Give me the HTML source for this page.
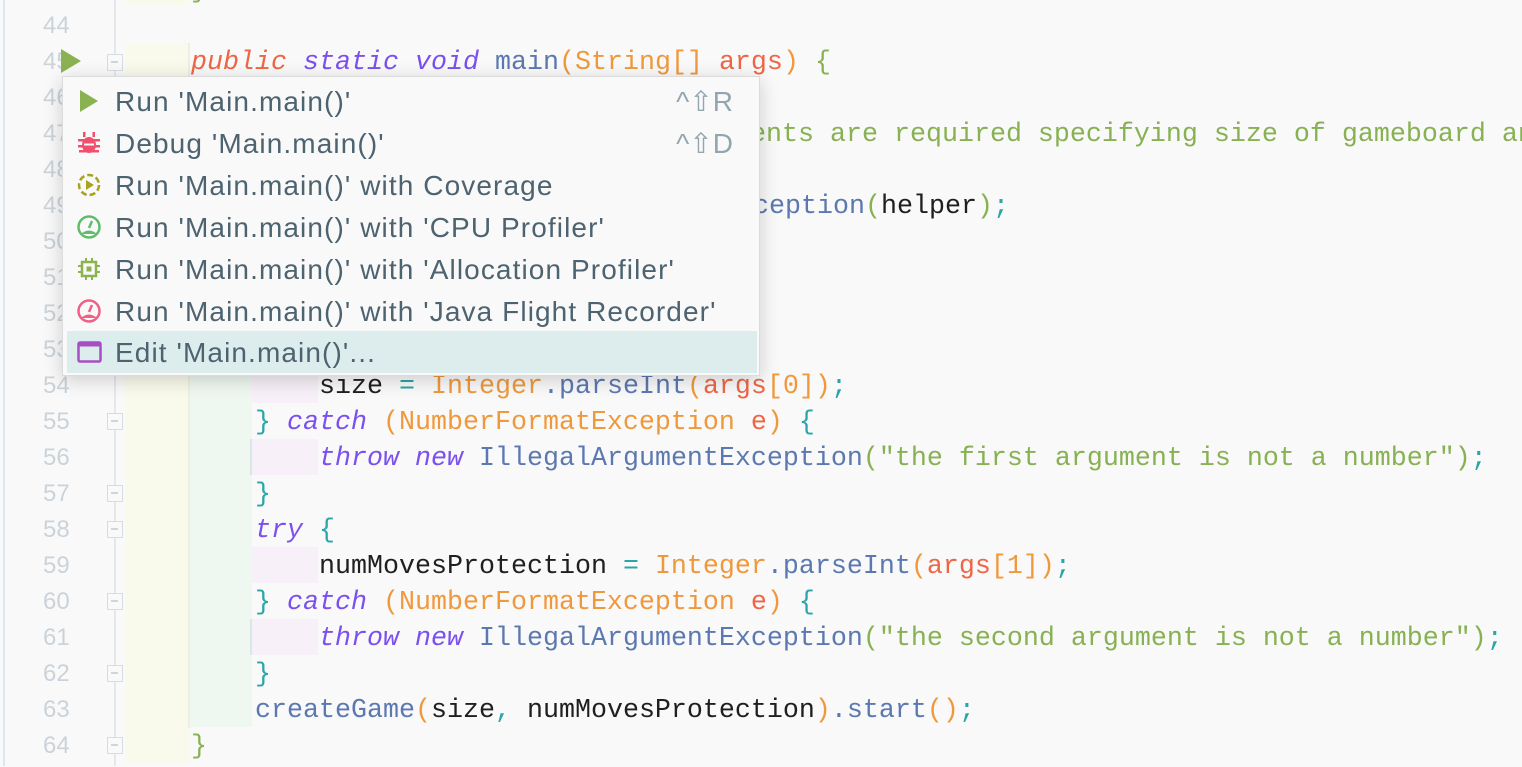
<!DOCTYPE html>
<html><head><meta charset="utf-8"><style>
*{margin:0;padding:0;box-sizing:border-box}
body{width:1522px;height:766px;background:#f9f9f9;position:relative;overflow:hidden;font-family:"Liberation Mono",monospace}
.ln{position:absolute;left:43px;width:40px;text-align:left;font-family:"Liberation Sans",sans-serif;font-size:24px;color:#cbd3d9;height:36px;line-height:38px}
.c{position:absolute;font-size:26.67px;line-height:40px;height:36px;white-space:pre;color:#1f1f1f}
.k{color:#7b50ee;font-style:italic}
.kp{color:#ee6645;font-style:italic}
.o{color:#f0983c}.r{color:#ee6645}.b{color:#5b78b1}.g{color:#87b152}.t{color:#2aa5a8}
.band{position:absolute}
.fold{position:absolute;left:107px;width:16px;height:17px;border:1.5px solid #d6dde2;background:#f9f9f9}
.fold::after{content:"";position:absolute;left:3px;top:6px;width:7px;height:1.5px;background:#cfd6db}
.pop{position:absolute;left:62px;top:76px;width:698px;height:300px;background:#f9f9f9;border:1px solid #dcdcdc;box-shadow:0 4px 18px rgba(0,0,0,.18)}
.it{position:absolute;left:4px;width:690px;height:42px;font-family:"Liberation Sans",sans-serif;font-size:28px;letter-spacing:1.1px;color:#4d6370;line-height:44px}
.it .tx{position:absolute;left:48px}
.it .sc{position:absolute;right:24px;color:#93a6b0;letter-spacing:0}
.it svg{position:absolute;left:10px;top:9px}
</style></head><body>
<div style="position:absolute;left:3px;top:0;width:2px;height:766px;background:#dde7ee"></div>
<div style="position:absolute;left:114px;top:0;width:2px;height:766px;background:#e4e8eb"></div>
<div class="band" style="left:126px;top:0;width:64px;height:6px;background:#f9faec"></div>
<div class="band" style="left:126px;top:43px;width:64px;height:720px;background:#f9faec"></div>
<div class="band" style="left:188px;top:43px;width:2px;height:685px;background:#eef0dc"></div>
<div class="band" style="left:190px;top:115px;width:62px;height:612px;background:#eff8f0"></div>
<div class="band" style="left:252px;top:367px;width:66px;height:36px;background:#f8f0f8"></div>
<div class="band" style="left:252px;top:439px;width:66px;height:36px;background:#f8f0f8"></div>
<div class="band" style="left:252px;top:547px;width:66px;height:36px;background:#f8f0f8"></div>
<div class="band" style="left:252px;top:619px;width:66px;height:36px;background:#f8f0f8"></div>
<div class="band" style="left:250px;top:439px;width:2px;height:36px;background:#d9e8e6"></div>
<div class="band" style="left:250px;top:619px;width:2px;height:36px;background:#d9e8e6"></div>

<div class="ln" style="top:7px">44</div><div class="ln" style="top:43px">45</div><div class="ln" style="top:79px">46</div><div class="ln" style="top:115px">47</div><div class="ln" style="top:151px">48</div><div class="ln" style="top:187px">49</div><div class="ln" style="top:223px">50</div><div class="ln" style="top:259px">51</div><div class="ln" style="top:295px">52</div><div class="ln" style="top:331px">53</div><div class="ln" style="top:367px">54</div><div class="ln" style="top:403px">55</div><div class="ln" style="top:439px">56</div><div class="ln" style="top:475px">57</div><div class="ln" style="top:511px">58</div><div class="ln" style="top:547px">59</div><div class="ln" style="top:583px">60</div><div class="ln" style="top:619px">61</div><div class="ln" style="top:655px">62</div><div class="ln" style="top:691px">63</div><div class="ln" style="top:727px">64</div>

<div class="fold" style="top:54px"></div><div class="fold" style="top:413px"></div><div class="fold" style="top:485px"></div><div class="fold" style="top:521px"></div><div class="fold" style="top:593px"></div><div class="fold" style="top:665px"></div><div class="fold" style="top:737px"></div>

<svg style="position:absolute;left:60px;top:48px" width="22" height="26"><path d="M1 1 L21 13 L1 25Z" fill="#8bb252"/></svg>

<div class="c" style="left:191px;top:-29px"><span class="g">}</span></div>
<div class="c" style="left:191px;top:43px"><span class="kp">public</span> <span class="k">static</span> <span class="k">void</span> <span class="b">main</span><span class="o">(String[]</span> <span class="r">args</span><span class="o">)</span> <span class="g">{</span></div>
<div class="c g" style="left:750px;top:115px">ents are required specifying size of gameboard and</div>
<div class="c" style="left:753px;top:187px"><span class="b">ception</span><span class="g">(</span>helper<span class="g">)</span><span class="t">;</span></div>
<div class="c" style="left:319px;top:367px">size <span class="t">=</span> <span class="o">Integer</span><span class="b">.parseInt</span><span class="o">(</span><span class="r">args</span><span class="o">[0])</span><span class="t">;</span></div>
<div class="c" style="left:255px;top:403px"><span class="t">}</span> <span class="k">catch</span> <span class="o">(NumberFormatException</span> <span class="r">e</span><span class="o">)</span> <span class="t">{</span></div>
<div class="c" style="left:319px;top:439px"><span class="k">throw</span> <span class="k">new</span> <span class="b">IllegalArgumentException</span><span class="g">("the first argument is not a number")</span><span class="t">;</span></div>
<div class="c" style="left:255px;top:475px"><span class="t">}</span></div>
<div class="c" style="left:255px;top:511px"><span class="k">try</span> <span class="t">{</span></div>
<div class="c" style="left:319px;top:547px">numMovesProtection <span class="t">=</span> <span class="o">Integer</span><span class="b">.parseInt</span><span class="o">(</span><span class="r">args</span><span class="o">[1])</span><span class="t">;</span></div>
<div class="c" style="left:255px;top:583px"><span class="t">}</span> <span class="k">catch</span> <span class="o">(NumberFormatException</span> <span class="r">e</span><span class="o">)</span> <span class="t">{</span></div>
<div class="c" style="left:319px;top:619px"><span class="k">throw</span> <span class="k">new</span> <span class="b">IllegalArgumentException</span><span class="g">("the second argument is not a number")</span><span class="t">;</span></div>
<div class="c" style="left:255px;top:655px"><span class="t">}</span></div>
<div class="c" style="left:255px;top:691px"><span class="b">createGame</span><span class="o">(</span>size<span class="t">,</span> numMovesProtection<span class="o">)</span><span class="b">.start</span><span class="o">()</span><span class="t">;</span></div>
<div class="c" style="left:191px;top:727px"><span class="g">}</span></div>

<div class="pop">
<div class="it" style="top:3px"><svg width="24" height="24"><path d="M3 1 L21 12 L3 23Z" fill="#8bb252"/></svg><span class="tx">Run 'Main.main()'</span><span class="sc">^⇧R</span></div>
<div class="it" style="top:45px"><svg width="24" height="24"><g fill="#f0506e"><ellipse cx="12" cy="14" rx="7" ry="8"/><rect x="1" y="8" width="22" height="2.5"/><rect x="1" y="14" width="22" height="2.5"/><rect x="2" y="19" width="20" height="2.5"/><rect x="6" y="1" width="2.5" height="5"/><rect x="15.5" y="1" width="2.5" height="5"/></g><rect x="7" y="12.5" width="10" height="2" fill="#f9f9f9"/></svg><span class="tx">Debug 'Main.main()'</span><span class="sc">^⇧D</span></div>
<div class="it" style="top:87px"><svg width="24" height="24"><circle cx="12" cy="12" r="10" fill="none" stroke="#a8a420" stroke-width="2.5" stroke-dasharray="6 3"/><path d="M9 7 L17 12 L9 17Z" fill="#a8a420"/></svg><span class="tx">Run 'Main.main()' with Coverage</span></div>
<div class="it" style="top:129px"><svg width="24" height="24"><circle cx="12" cy="12" r="10.5" fill="none" stroke="#5fbd6a" stroke-width="2.5"/><path d="M4 19 Q12 12 20 19 Z" fill="#5fbd6a"/><path d="M12 13 L15 6" stroke="#5fbd6a" stroke-width="2.5"/></svg><span class="tx">Run 'Main.main()' with 'CPU Profiler'</span></div>
<div class="it" style="top:171px"><svg width="24" height="24"><rect x="5" y="5" width="14" height="14" fill="none" stroke="#8db34f" stroke-width="2.5"/><rect x="9.5" y="9.5" width="5" height="5" fill="#8db34f"/><g stroke="#8db34f" stroke-width="2"><path d="M1 9h4M1 15h4M19 9h4M19 15h4M9 1v4M15 1v4M9 19v4M15 19v4"/></g></svg><span class="tx">Run 'Main.main()' with 'Allocation Profiler'</span></div>
<div class="it" style="top:213px"><svg width="24" height="24"><circle cx="12" cy="12" r="10.5" fill="none" stroke="#ef5f86" stroke-width="2.5"/><path d="M4 19 Q12 12 20 19 Z" fill="#ef5f86"/><path d="M12 13 L15 6" stroke="#ef5f86" stroke-width="2.5"/></svg><span class="tx">Run 'Main.main()' with 'Java Flight Recorder'</span></div>
<div class="it" style="top:254px;background:#ddeded"><svg width="26" height="24"><rect x="1.5" y="2.5" width="22" height="19" rx="1.5" fill="none" stroke="#a54fc2" stroke-width="2.5"/><rect x="1.5" y="2.5" width="22" height="4" fill="#a54fc2"/></svg><span class="tx">Edit 'Main.main()'...</span></div>
</div>
</body></html>
